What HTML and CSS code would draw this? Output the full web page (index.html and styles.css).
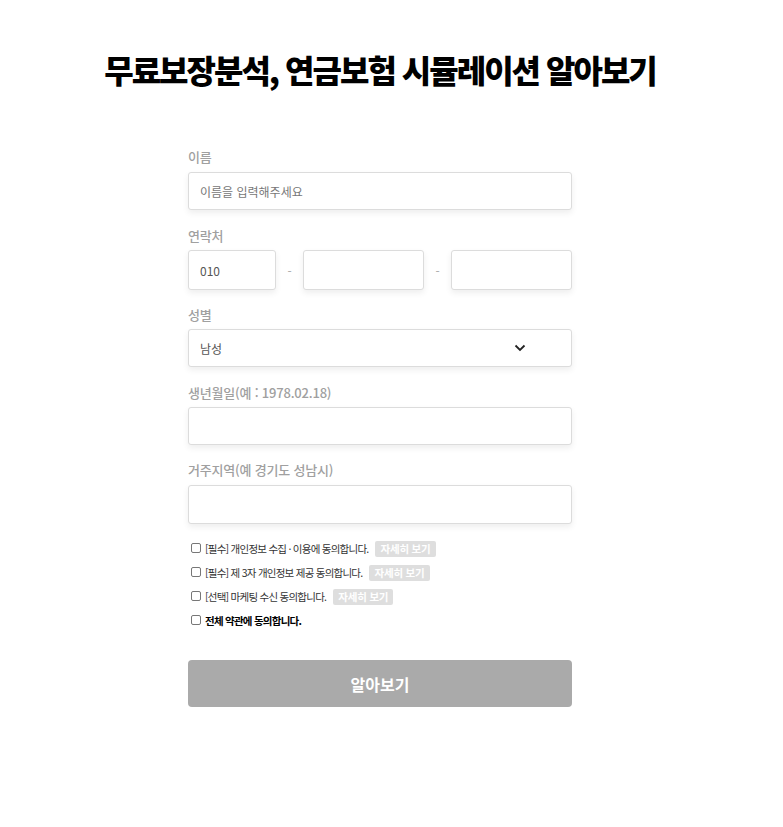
FILE: index.html
```html
<!DOCTYPE html>
<html lang="ko">
<head>
<meta charset="utf-8">
<link rel="stylesheet" href="styles.css">
</head>
<body>
<div class="page">
  <h1 class="title">무료보장분석, 연금보험 시뮬레이션 알아보기</h1>
  <form class="form">
    <div class="field wide">
      <div class="label loose">이름</div>
      <div class="box"><span class="ph">이름을 입력해주세요</span></div>
    </div>
    <div class="field">
      <div class="label">연락처</div>
      <div class="phone">
        <div class="box tall small"><span class="val">010</span></div>
        <span class="dash">-</span>
        <div class="box tall"></div>
        <span class="dash">-</span>
        <div class="box tall"></div>
      </div>
    </div>
    <div class="field wide">
      <div class="label">성별</div>
      <div class="box select"><span class="val">남성</span>
        <svg class="chev" width="12" height="8" viewBox="0 0 12 8"><path d="M1.5 1.5 L6 6 L10.5 1.5" fill="none" stroke="#222" stroke-width="1.8"/></svg>
      </div>
    </div>
    <div class="field">
      <div class="label">생년월일(예 : 1978.02.18)</div>
      <div class="box"></div>
    </div>
    <div class="field">
      <div class="label loose">거주지역(예 경기도 성남시)</div>
      <div class="box last"></div>
    </div>
    <div class="agrees">
      <div class="agree"><span class="cb"></span><span class="atext">[필수] 개인정보 수집 · 이용에 동의합니다.</span><span class="more">자세히 보기</span></div>
      <div class="agree"><span class="cb"></span><span class="atext">[필수] 제 3자 개인정보 제공 동의합니다.</span><span class="more">자세히 보기</span></div>
      <div class="agree"><span class="cb"></span><span class="atext">[선택] 마케팅 수신 동의합니다.</span><span class="more">자세히 보기</span></div>
      <div class="agree"><span class="cb"></span><span class="atext all">전체 약관에 동의합니다.</span></div>
    </div>
    <div class="submit">알아보기</div>
  </form>
</div>
</body>
</html>
```

FILE: styles.css
```css
html, body {
  margin: 0;
  padding: 0;
  background: #fff;
}
body {
  font-family: "Noto Sans CJK KR", "Noto Sans", sans-serif;
  color: #333;
}
.page {
  width: 760px;
  padding-top: 46px;
}
.title {
  margin: 0;
  text-align: center;
  font-size: 32px;
  line-height: 46px;
  font-weight: 900;
  letter-spacing: -2px;
  color: #000;
}
.form {
  width: 384px;
  margin: 55px auto 0;
}
.field {
  margin-bottom: 15px;
}
.field.wide {
  margin-bottom: 16px;
}
.label {
  font-size: 13px;
  line-height: 20px;
  font-weight: 500;
  color: #a0a0a0;
  margin-bottom: 4px;
  letter-spacing: -0.2px;
}
.label.loose {
  margin-bottom: 5px;
}
.box {
  box-sizing: border-box;
  height: 38px;
  border: 1px solid #dcdcdc;
  border-radius: 3px;
  box-shadow: 0 3px 6px rgba(0, 0, 0, 0.07);
  background: #fff;
  display: flex;
  align-items: center;
  padding-left: 11px;
  font-size: 12px;
}
.box.tall {
  height: 40px;
  flex: 1;
}
.box.small {
  flex: 0 0 88px;
}
.box.last {
  height: 39px;
}
.ph {
  color: #777;
}
.val {
  color: #555;
}
.phone {
  display: flex;
  align-items: center;
}
.dash {
  width: 27px;
  text-align: center;
  color: #aaa;
  font-size: 12px;
  flex: 0 0 27px;
}
.phone .dash + .box {
  flex: 0 0 121px;
}
.select {
  justify-content: space-between;
  padding-right: 45px;
}
.agrees {
  padding-left: 3px;
  margin-top: -2px;
}
.agree {
  display: flex;
  align-items: center;
  height: 24px;
  line-height: 16px;
}
.cb {
  box-sizing: border-box;
  width: 10px;
  height: 10px;
  border: 1px solid #777;
  border-radius: 2px;
  margin-right: 4px;
  margin-top: -2px;
}
.atext {
  font-size: 10.5px;
  color: #333;
  letter-spacing: -0.75px;
}
.atext.all {
  font-weight: 700;
  color: #000;
}
.more {
  margin-left: 7px;
  background: #dedede;
  color: #fff;
  font-size: 10.5px;
  font-weight: 700;
  line-height: 16px;
  padding: 0 5px;
  border-radius: 2px;
  letter-spacing: -0.2px;
}
.submit {
  margin-top: 27px;
  height: 47px;
  background: #aaa;
  border-radius: 4px;
  color: #fff;
  font-size: 16px;
  font-weight: 700;
  display: flex;
  align-items: center;
  justify-content: center;
}
```
